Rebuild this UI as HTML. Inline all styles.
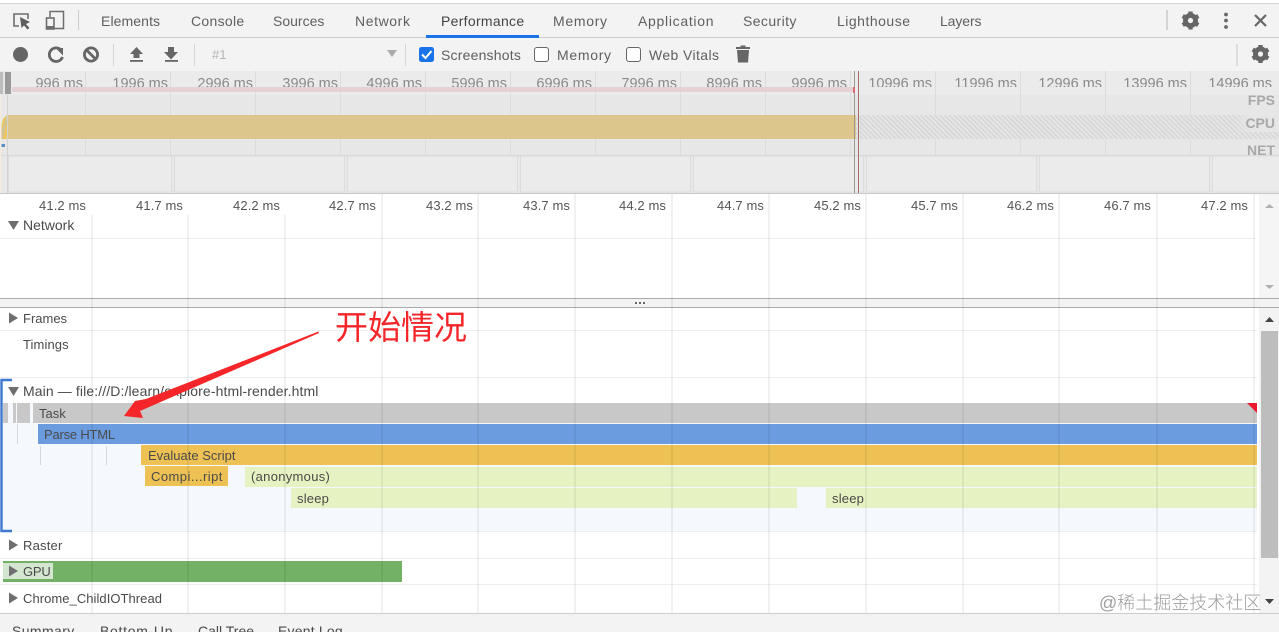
<!DOCTYPE html>
<html><head><meta charset="utf-8">
<style>
html,body{margin:0;padding:0;background:#fff}
#p{position:relative;width:1279px;height:632px;overflow:hidden;background:#fff;font-family:"Liberation Sans","Noto Sans CJK SC",sans-serif;color:#444;font-size:13px}
#p div,#p span.t{position:absolute;white-space:nowrap}
.tab{top:12px;font-size:14px;line-height:18px;color:#5f5f5f}
.o{top:76px;font-size:14.5px;line-height:16px;color:#8a8a8a;height:11px;overflow:hidden;text-align:right;width:80px}
.r{top:198px;font-size:13px;line-height:16px;color:#555;width:79px;text-align:right;letter-spacing:.1px}
.l{font-size:13px;line-height:16px;color:#4a4a4a}
.lab{font-size:14px;font-weight:bold;color:#a8a8a8;right:4px;line-height:16px}
.tb{font-size:14px;line-height:18px;color:#5f5f5f;top:46px}
.f{font-size:13px;line-height:16px;color:#4a4a4a}
.g{width:2px;background:rgba(0,0,0,.055)}
</style></head><body><div id="p">

<!-- top bars -->
<div style="left:0;top:0;width:1279px;height:4px;background:#fff"></div>
<div style="left:0;top:3px;width:1279px;height:1px;background:#d4d4d4"></div>
<div style="left:0;top:4px;width:1279px;height:33px;background:#f3f3f3"></div>
<div style="left:0;top:37px;width:1279px;height:1px;background:#ccc"></div>
<div style="left:0;top:38px;width:1279px;height:33px;background:#f3f3f3"></div>

<div class="tab" style="left:101px;letter-spacing:.1px">Elements</div>
<div class="tab" style="left:191px;letter-spacing:.3px">Console</div>
<div class="tab" style="left:273px">Sources</div>
<div class="tab" style="left:355px;letter-spacing:.6px">Network</div>
<div class="tab" style="left:441px;color:#444;letter-spacing:.3px">Performance</div>
<div class="tab" style="left:553px;letter-spacing:.7px">Memory</div>
<div class="tab" style="left:638px;letter-spacing:.7px">Application</div>
<div class="tab" style="left:743px;letter-spacing:.4px">Security</div>
<div class="tab" style="left:837px;letter-spacing:.5px">Lighthouse</div>
<div class="tab" style="left:940px;letter-spacing:-.1px">Layers</div>
<div style="left:426px;top:35px;width:113px;height:3px;background:#1a73e8"></div>

<svg style="position:absolute;left:0;top:0" width="1279" height="72" viewBox="0 0 1279 72">
 <!-- inspect -->
 <path d="M19 26H14V14H28V19" fill="none" stroke="#6e6e6e" stroke-width="1.6"/>
 <path d="M20 17L30 22L26 24L29.5 28L27.5 29.5L24 25.5L21.5 28Z" fill="#5f5f5f"/>
 <!-- device -->
 <path d="M50 17V11.5H63.5V28.5H46" fill="none" stroke="#6e6e6e" stroke-width="1.5"/>
 <rect x="46.5" y="18" width="7.5" height="11" fill="none" stroke="#6e6e6e" stroke-width="1.6"/>
 <rect x="46" y="26" width="8" height="3" fill="#6e6e6e"/>
 <rect x="78" y="10" width="1" height="20" fill="#ccc"/>
 <rect x="1166" y="10" width="2" height="20" fill="#d4d4d4"/>
 <!-- gear top -->
 <g transform="translate(1190.5 20.5)">
  <circle r="5.5" fill="none" stroke="#666" stroke-width="4"/>
  <g fill="#666"><rect x="-2.2" y="-9" width="4.4" height="18"/><rect x="-2.2" y="-9" width="4.4" height="18" transform="rotate(60)"/><rect x="-2.2" y="-9" width="4.4" height="18" transform="rotate(120)"/></g>
  <circle r="2.6" fill="#f3f3f3"/>
 </g>
 <circle cx="1226" cy="14.5" r="1.9" fill="#666"/><circle cx="1226" cy="20.5" r="1.9" fill="#666"/><circle cx="1226" cy="27" r="1.9" fill="#666"/>
 <path d="M1255 15L1266 26M1266 15L1255 26" stroke="#666" stroke-width="2.2"/>
 <!-- record -->
 <circle cx="20.5" cy="54.5" r="7.5" fill="#666"/>
 <!-- reload -->
 <path d="M61.5 50.5A6.8 6.8 0 1 0 62.5 57" fill="none" stroke="#666" stroke-width="2.8"/>
 <path d="M55.5 47H63V54.5Z" fill="#666" transform="translate(0 1)"/>
 <!-- clear -->
 <circle cx="91" cy="54.5" r="6.6" fill="none" stroke="#666" stroke-width="2.8"/>
 <path d="M86.5 50L95.5 59" stroke="#666" stroke-width="2.8"/>
 <rect x="113" y="44" width="1" height="22" fill="#d6d6d6"/>
 <!-- upload -->
 <path d="M136.5 47L143 54H139.5V58H133.5V54H130Z" fill="#666"/><rect x="130" y="60" width="13" height="1.8" fill="#666"/>
 <!-- download -->
 <path d="M168 47H174V52H178L171 59.5L164 52H168Z" fill="#666"/><rect x="165" y="60" width="13" height="1.8" fill="#666"/>
 <rect x="194" y="44" width="1" height="22" fill="#d6d6d6"/>
 <path d="M387 50H397L392 57Z" fill="#aaa"/>
 <rect x="405" y="44" width="1" height="22" fill="#d6d6d6"/>
 <!-- checkboxes -->
 <rect x="419" y="47" width="15" height="15" rx="2.5" fill="#1a73e8"/>
 <path d="M422 54.5L425.5 58L431.5 51" fill="none" stroke="#fff" stroke-width="2"/>
 <rect x="534.5" y="47.5" width="14" height="14" rx="2.5" fill="#fff" stroke="#666"/>
 <rect x="626.5" y="47.5" width="14" height="14" rx="2.5" fill="#fff" stroke="#666"/>
 <!-- trash -->
 <path d="M737 50H749L748 62.5H738Z" fill="#666"/><rect x="736" y="47" width="14" height="2" fill="#666"/><rect x="740.5" y="45.5" width="5" height="2" fill="#666"/>
 <rect x="1236" y="44" width="2" height="22" fill="#ddd"/>
 <g transform="translate(1260.5 54)">
  <circle r="5.5" fill="none" stroke="#666" stroke-width="4"/>
  <g fill="#666"><rect x="-2.2" y="-9" width="4.4" height="18"/><rect x="-2.2" y="-9" width="4.4" height="18" transform="rotate(60)"/><rect x="-2.2" y="-9" width="4.4" height="18" transform="rotate(120)"/></g>
  <circle r="2.6" fill="#f3f3f3"/>
 </g>
</svg>

<div style="left:212px;top:47px;font-size:13px;line-height:16px;color:#b5b5b5">#1</div>
<div class="tb" style="left:441px;letter-spacing:.2px">Screenshots</div>
<div class="tb" style="left:557px;letter-spacing:.7px">Memory</div>
<div class="tb" style="left:649px;letter-spacing:.4px">Web Vitals</div>

<!-- overview -->
<div style="left:0;top:71px;width:1279px;height:122px;background:#e8e8e8"></div>
<svg style="position:absolute;left:0;top:71px" width="1279" height="123" viewBox="0 0 1279 123">
 <defs><pattern id="h" width="3.4" height="3.4" patternUnits="userSpaceOnUse" patternTransform="rotate(-45)"><rect width="3.4" height="3.4" fill="#e6e6e6"/><rect width="1.6" height="3.4" fill="#d6d6d6"/></pattern>
 <linearGradient id="fade" x1="0" x2="1"><stop offset="0" stop-color="#e6e6e6" stop-opacity="0"/><stop offset=".35" stop-color="#e6e6e6"/></linearGradient></defs>
 <rect x="0" y="0" width="1279" height="84" fill="#e7e7e7"/>
 <rect x="8" y="0" width="1271" height="24" fill="#ebebeb"/>
 <g fill="#dcdcdc">
  <rect x="85" y="0" width="1" height="84"/><rect x="170" y="0" width="1" height="84"/><rect x="255" y="0" width="1" height="84"/><rect x="340" y="0" width="1" height="84"/><rect x="425" y="0" width="1" height="84"/><rect x="510" y="0" width="1" height="84"/><rect x="595" y="0" width="1" height="84"/><rect x="680" y="0" width="1" height="84"/><rect x="765" y="0" width="1" height="84"/><rect x="850" y="0" width="1" height="84"/><rect x="935" y="0" width="1" height="84"/><rect x="1020" y="0" width="1" height="84"/><rect x="1105" y="0" width="1" height="84"/><rect x="1190" y="0" width="1" height="84"/>
 </g>
 <rect x="856" y="44" width="423" height="24" fill="url(#h)"/>
 <rect x="1236" y="44" width="43" height="17" fill="url(#fade)"/>
 <rect x="7" y="44" width="849" height="24" fill="#dcc68c"/>
 <path d="M0 68V60L3 48L7 44V68Z" fill="#ecc75f"/>
 <path d="M1 60L7 44V50L3 68H1Z" fill="#c8c2ad" opacity=".7"/>
 <rect x="1" y="73" width="4" height="3" fill="#5a8fc8"/>
 <rect x="0" y="84" width="1279" height="1" fill="#d6d6d6"/>
 <g fill="#ebebeb" stroke="#dcdcdc">
  <rect x="8.5" y="85" width="163" height="36"/><rect x="174.5" y="85" width="170" height="36"/><rect x="347.5" y="85" width="170" height="36"/><rect x="520.5" y="85" width="170" height="36"/><rect x="693.5" y="85" width="170" height="36"/><rect x="866.5" y="85" width="170" height="36"/><rect x="1039.5" y="85" width="170" height="36"/><rect x="1212.5" y="85" width="70" height="36"/>
 </g>
 <rect x="0" y="0" width="1.5" height="122" fill="#f2ece0"/>
 <rect x="7" y="24" width="1" height="98" fill="#d3d3d3"/>
 <rect x="5" y="1" width="6" height="22" fill="#9a9a9a"/>
 <rect x="0" y="1" width="3" height="22" fill="#bdbdbd"/>
 <rect x="854" y="0" width="1" height="122" fill="#9b9b8f"/>
 <rect x="858" y="0" width="1" height="122" fill="#a86b66"/>
</svg>
<div class="o" style="left:3px">996 ms</div>
<div class="o" style="left:88px">1996 ms</div>
<div class="o" style="left:173px">2996 ms</div>
<div class="o" style="left:258px">3996 ms</div>
<div class="o" style="left:342px">4996 ms</div>
<div class="o" style="left:427px">5996 ms</div>
<div class="o" style="left:512px">6996 ms</div>
<div class="o" style="left:597px">7996 ms</div>
<div class="o" style="left:682px">8996 ms</div>
<div class="o" style="left:767px">9996 ms</div>
<div class="o" style="left:852px">10996 ms</div>
<div class="o" style="left:937px">11996 ms</div>
<div class="o" style="left:1022px">12996 ms</div>
<div class="o" style="left:1107px">13996 ms</div>
<div class="o" style="left:1192px">14996 ms</div>
<div style="left:12px;top:87px;width:842px;height:5px;background:#e5d2d4"></div>
<div style="left:853px;top:87px;width:2px;height:6px;background:#e06a70"></div>
<div class="lab" style="top:92px">FPS</div>
<div class="lab" style="top:115px">CPU</div>
<div class="lab" style="top:142px">NET</div>
<div style="left:0;top:193px;width:1279px;height:1px;background:#c8c8c8"></div>

<!-- lower background -->
<div style="left:0;top:403px;width:1257px;height:128px;background:#f5f9fe"></div>
<div style="left:33px;top:403px;width:1224px;height:20px;background:#c8c8c8"></div>
<div style="left:3px;top:403px;width:5px;height:20px;background:#c8c8c8"></div>
<div style="left:13px;top:403px;width:3px;height:20px;background:#c8c8c8"></div>
<div style="left:17px;top:403px;width:13px;height:20px;background:#c8c8c8"></div>
<div style="left:38px;top:424px;width:1219px;height:20px;background:#6a9cdf"></div>
<div style="left:141px;top:445px;width:1116px;height:20px;background:#edc153"></div>
<div style="left:145px;top:466px;width:83px;height:20px;background:#edc153"></div>
<div style="left:245px;top:467px;width:1012px;height:20px;background:#e6f2c2"></div>
<div style="left:291px;top:488px;width:506px;height:20px;background:#e6f2c2"></div>
<div style="left:826px;top:488px;width:431px;height:20px;background:#e6f2c2"></div>
<div style="left:17px;top:424px;width:1px;height:20px;background:#d4d8dc"></div>
<div style="left:40px;top:446px;width:1px;height:19px;background:#d4d8dc"></div>
<div style="left:106px;top:446px;width:1px;height:19px;background:#d4d8dc"></div>
<div style="left:3px;top:561px;width:399px;height:21px;background:#73b166"></div>
<div style="left:3px;top:563px;width:50px;height:16px;background:#d5e6d0"></div>

<!-- row separators -->
<div style="left:0;top:238px;width:1255px;height:1px;background:#eee"></div>
<div style="left:0;top:330px;width:1257px;height:1px;background:#eee"></div>
<div style="left:0;top:377px;width:1257px;height:1px;background:#eee"></div>
<div style="left:0;top:531px;width:1257px;height:1px;background:#eee"></div>
<div style="left:0;top:558px;width:1257px;height:1px;background:#eee"></div>
<div style="left:0;top:584px;width:1257px;height:1px;background:#eee"></div>

<!-- splitter -->
<div style="left:0;top:298px;width:1279px;height:1px;background:#aaa"></div>
<div style="left:0;top:299px;width:1279px;height:8px;background:#f3f3f3"></div>
<div style="left:0;top:307px;width:1279px;height:1px;background:#aaa"></div>
<div style="left:635px;top:302px;width:10px;height:2px;background:repeating-linear-gradient(90deg,#666 0 2px,transparent 2px 4px)"></div>

<!-- vertical grid -->
<div class="g" style="left:91px;top:215px;height:398px"></div>
<div class="g" style="left:187px;top:215px;height:398px"></div>
<div class="g" style="left:284px;top:215px;height:398px"></div>
<div class="g" style="left:381px;top:194px;height:419px"></div>
<div class="g" style="left:477px;top:194px;height:419px"></div>
<div class="g" style="left:574px;top:194px;height:419px"></div>
<div class="g" style="left:671px;top:194px;height:419px"></div>
<div class="g" style="left:768px;top:194px;height:419px"></div>
<div class="g" style="left:865px;top:194px;height:419px"></div>
<div class="g" style="left:962px;top:194px;height:419px"></div>
<div class="g" style="left:1058px;top:194px;height:419px"></div>
<div class="g" style="left:1156px;top:194px;height:419px"></div>
<div class="g" style="left:1253px;top:194px;height:419px"></div>

<!-- ruler -->
<div class="r" style="left:7px">41.2 ms</div>
<div class="r" style="left:104px">41.7 ms</div>
<div class="r" style="left:201px">42.2 ms</div>
<div class="r" style="left:297px">42.7 ms</div>
<div class="r" style="left:394px">43.2 ms</div>
<div class="r" style="left:491px">43.7 ms</div>
<div class="r" style="left:587px">44.2 ms</div>
<div class="r" style="left:685px">44.7 ms</div>
<div class="r" style="left:782px">45.2 ms</div>
<div class="r" style="left:879px">45.7 ms</div>
<div class="r" style="left:975px">46.2 ms</div>
<div class="r" style="left:1072px">46.7 ms</div>
<div class="r" style="left:1169px">47.2 ms</div>

<!-- labels -->
<div class="l" style="left:23px;top:217px;font-size:14px">Network</div>
<div class="l" style="left:23px;top:311px">Frames</div>
<div class="l" style="left:23px;top:337px;letter-spacing:.1px">Timings</div>
<div class="l" style="left:23px;top:383px;font-size:14px;letter-spacing:.11px">Main — file:///D:/learn/explore-html-render.html</div>
<div class="f" style="left:39px;top:406px">Task</div>
<div class="f" style="left:44px;top:427px;letter-spacing:-.2px">Parse HTML</div>
<div class="f" style="left:148px;top:448px">Evaluate Script</div>
<div class="f" style="left:151px;top:469px;letter-spacing:.45px">Compi...ript</div>
<div class="f" style="left:251px;top:469px;letter-spacing:.3px">(anonymous)</div>
<div class="f" style="left:297px;top:491px;letter-spacing:.2px">sleep</div>
<div class="f" style="left:832px;top:491px;letter-spacing:.2px">sleep</div>
<div class="l" style="left:23px;top:538px;letter-spacing:.2px">Raster</div>
<div class="l" style="left:23px;top:564px;letter-spacing:-.2px">GPU</div>
<div class="l" style="left:23px;top:591px;letter-spacing:.05px">Chrome_ChildIOThread</div>

<!-- scrollbars -->
<div style="left:1259px;top:194px;width:20px;height:104px;background:#f5f5f5"></div>
<div style="left:1259px;top:308px;width:20px;height:305px;background:#f3f3f3"></div>
<div style="left:1261px;top:331px;width:17px;height:227px;background:#bdbdbd"></div>

<svg style="position:absolute;left:0;top:0" width="1279" height="632" viewBox="0 0 1279 632">
 <g fill="#6e6e6e">
  <path d="M8 221H19L13.5 230Z"/>
  <path d="M9 312.5L18 318L9 323.5Z"/>
  <path d="M8 387H19L13.5 396Z"/>
  <path d="M9 539.5L18 545L9 550.5Z"/>
  <path d="M9 565.5L18 571L9 576.5Z"/>
  <path d="M9 592.5L18 598L9 603.5Z"/>
 </g>
 <path d="M1265 208L1269.5 204L1274 208Z" fill="#b0b0b0"/>
 <path d="M1265 285H1274L1269.5 289Z" fill="#b0b0b0"/>
 <path d="M1265 322L1269.5 317L1274 322Z" fill="#444"/>
 <path d="M1265 599H1274L1269.5 604Z" fill="#444"/>
 <!-- track bracket -->
 <path d="M12 380H1.5V531H12" fill="none" stroke="#3f78d0" stroke-width="2.4"/>
 <!-- long task -->
 <path d="M1247 403H1257V413Z" fill="#e8192c"/>
 <!-- arrow -->
 <path d="M318.5 331.5L146 399L135 401L124 416L143 418L140 411L319 333Z" fill="#f5262a"/>
</svg>

<div style="left:335px;top:305px;font-size:33px;line-height:40px;color:#f5262a;font-family:'Noto Sans CJK SC',sans-serif;font-weight:400">开始情况</div>

<!-- bottom tabs -->
<div style="left:0;top:613px;width:1279px;height:19px;background:#f3f3f3"></div>
<div style="left:0;top:613px;width:1279px;height:1px;background:#ccc"></div>
<div class="f" style="left:12px;top:623px;font-size:14px;letter-spacing:.4px">Summary</div>
<div class="f" style="left:100px;top:623px;font-size:14px;letter-spacing:.7px">Bottom-Up</div>
<div class="f" style="left:198px;top:623px;font-size:14px">Call Tree</div>
<div class="f" style="left:278px;top:623px;font-size:14px;letter-spacing:.2px">Event Log</div>

<!-- watermark -->
<div style="left:1099px;top:591px;font-size:18px;line-height:24px;color:rgba(120,120,120,.72);font-family:'Liberation Sans','Noto Sans CJK SC',sans-serif;font-weight:300">@稀土掘金技术社区</div>
</div></body></html>
